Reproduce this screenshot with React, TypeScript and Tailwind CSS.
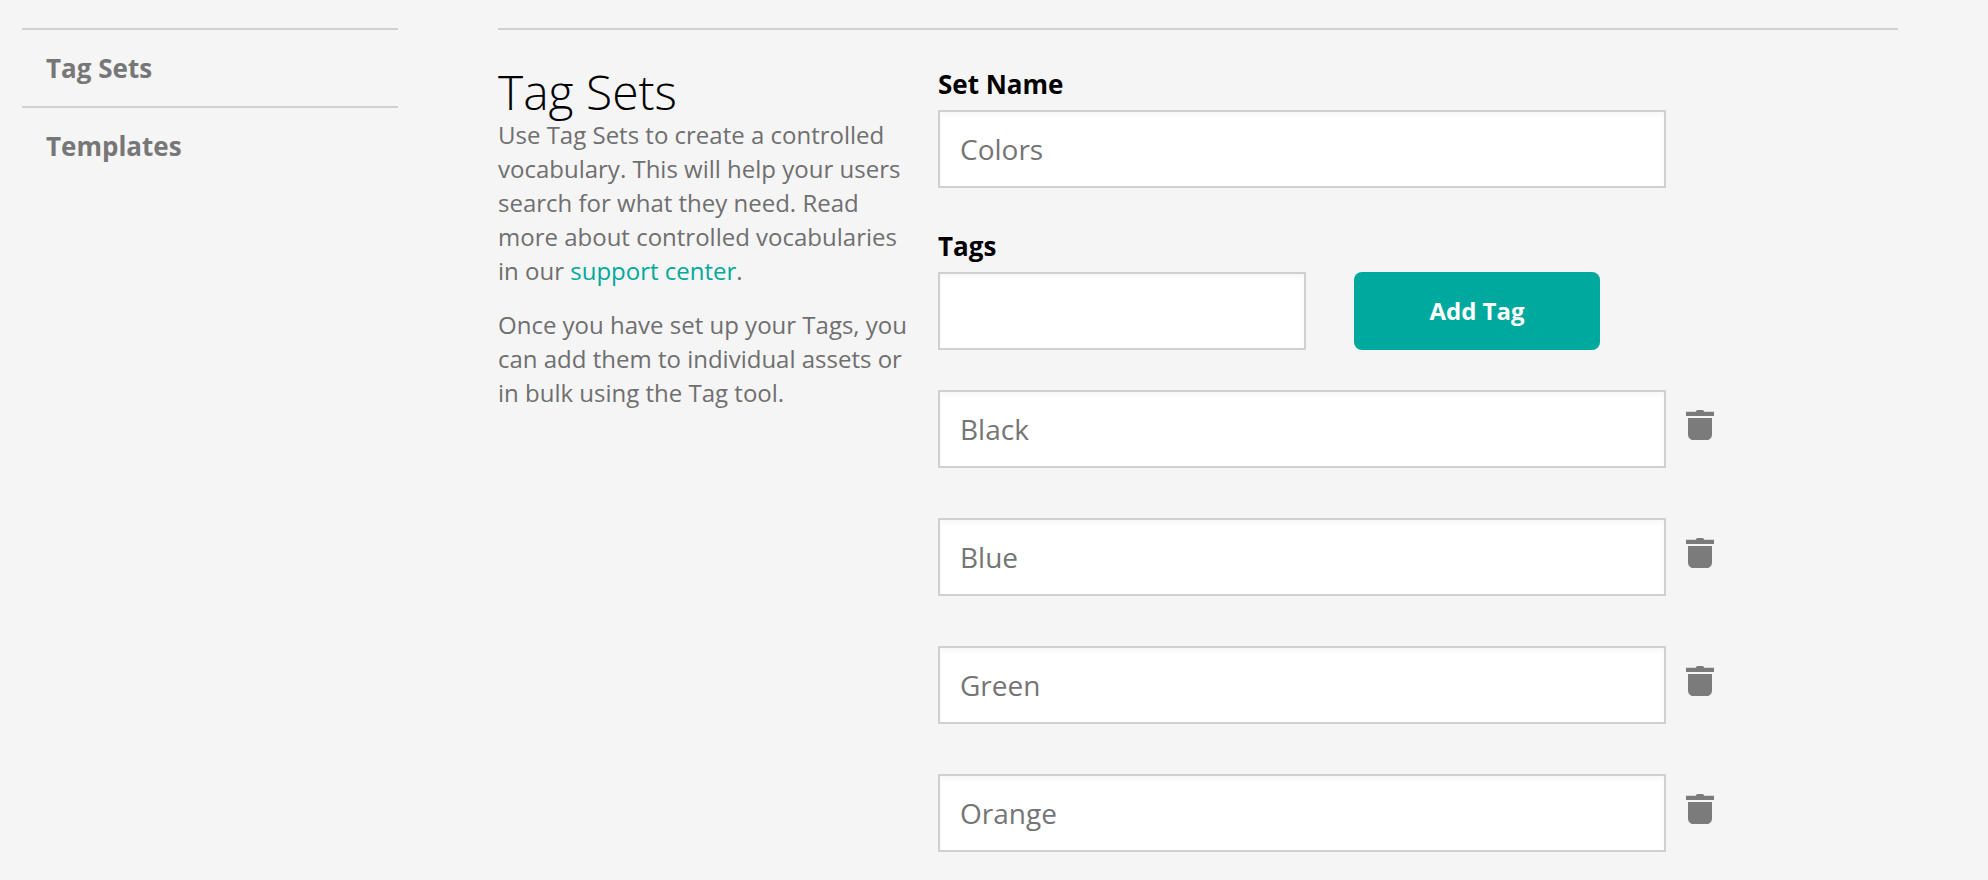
const tags = ["Black", "Blue", "Green", "Orange"];
const font = "font-['Open_Sans',sans-serif]";

function TrashIcon() {
  return (
    <svg width="28" height="30" viewBox="0 0 28 30" fill="#7b7b7b" className="shrink-0">
      <path d="M10 1.800C10 .7 10.700 0 11.500 0h5C17.300 0 18 .7 18 1.800h10V6H0V1.800z" />
      <path d="M2 8h24v16c0 3.500-2 6-5 6H7c-3 0-5-2.500-5-6z" />
    </svg>
  );
}

function TextInput({ value, className }: { value?: string; className: string }) {
  return (
    <input
      type="text"
      defaultValue={value}
      className={`h-[78px] bg-white border-2 border-[#d0d0d0] shadow-[inset_0_3px_4px_rgba(0,0,0,0.03)] pl-5 text-[28px] text-[#757575] outline-none ${className}`}
    />
  );
}

export default function App() {
  return (
    <div className={`${font} h-[880px] w-[1988px] overflow-hidden bg-[#f5f5f5] flex pt-7 pl-[22px]`}>
      <nav className="w-[376px] shrink-0 mr-[100px]">
        <div className="border-t-2 border-[#d0d0d0] h-[78px] pl-6 flex items-center text-[26px] font-bold text-[#777777]">
          Tag Sets
        </div>
        <div className="border-t-2 border-[#d0d0d0] h-[78px] pl-6 flex items-center text-[26px] font-bold text-[#777777]">
          Templates
        </div>
      </nav>

      <main className="w-[1400px] shrink-0 border-t-2 border-[#d0d0d0] flex">
        <section className="w-[440px] shrink-0 pt-[35px]">
          <h1 className="text-[48px] leading-[53px] font-light text-black">Tag Sets</h1>
          <p className="text-[24px] leading-[34px] text-[#6f6f6f] w-[420px]">
            Use Tag Sets to create a controlled vocabulary. This will help your users search for what they need. Read more about controlled vocabularies in our{" "}
            <a className="text-[#00a99d]">support center</a>.
          </p>
          <p className="text-[24px] leading-[34px] text-[#6f6f6f] mt-[20px] w-[420px]">
            Once you have set up your Tags, you can add them to individual assets or in bulk using the Tag tool.
          </p>
        </section>

        <section className="pt-[37px]">
          <label className="block text-[26px] leading-[34px] font-bold text-black mb-[9px]">Set Name</label>
          <TextInput value="Colors" className="block w-[728px]" />

          <label className="block text-[26px] leading-[34px] font-bold text-black mt-[41px] mb-[9px]">Tags</label>
          <div className="flex">
            <TextInput className="w-[368px]" />
            <button className="ml-12 w-[246px] h-[78px] rounded-lg bg-[#00a99d] text-white text-[24px] font-bold">
              Add Tag
            </button>
          </div>

          <div className="mt-10 flex flex-col gap-[50px]">
            {tags.map((tag) => (
              <div key={tag} className="flex items-start">
                <TextInput value={tag} className="w-[728px]" />
                <div className="ml-5 pt-[20px]">
                  <TrashIcon />
                </div>
              </div>
            ))}
          </div>
        </section>
      </main>
    </div>
  );
}
